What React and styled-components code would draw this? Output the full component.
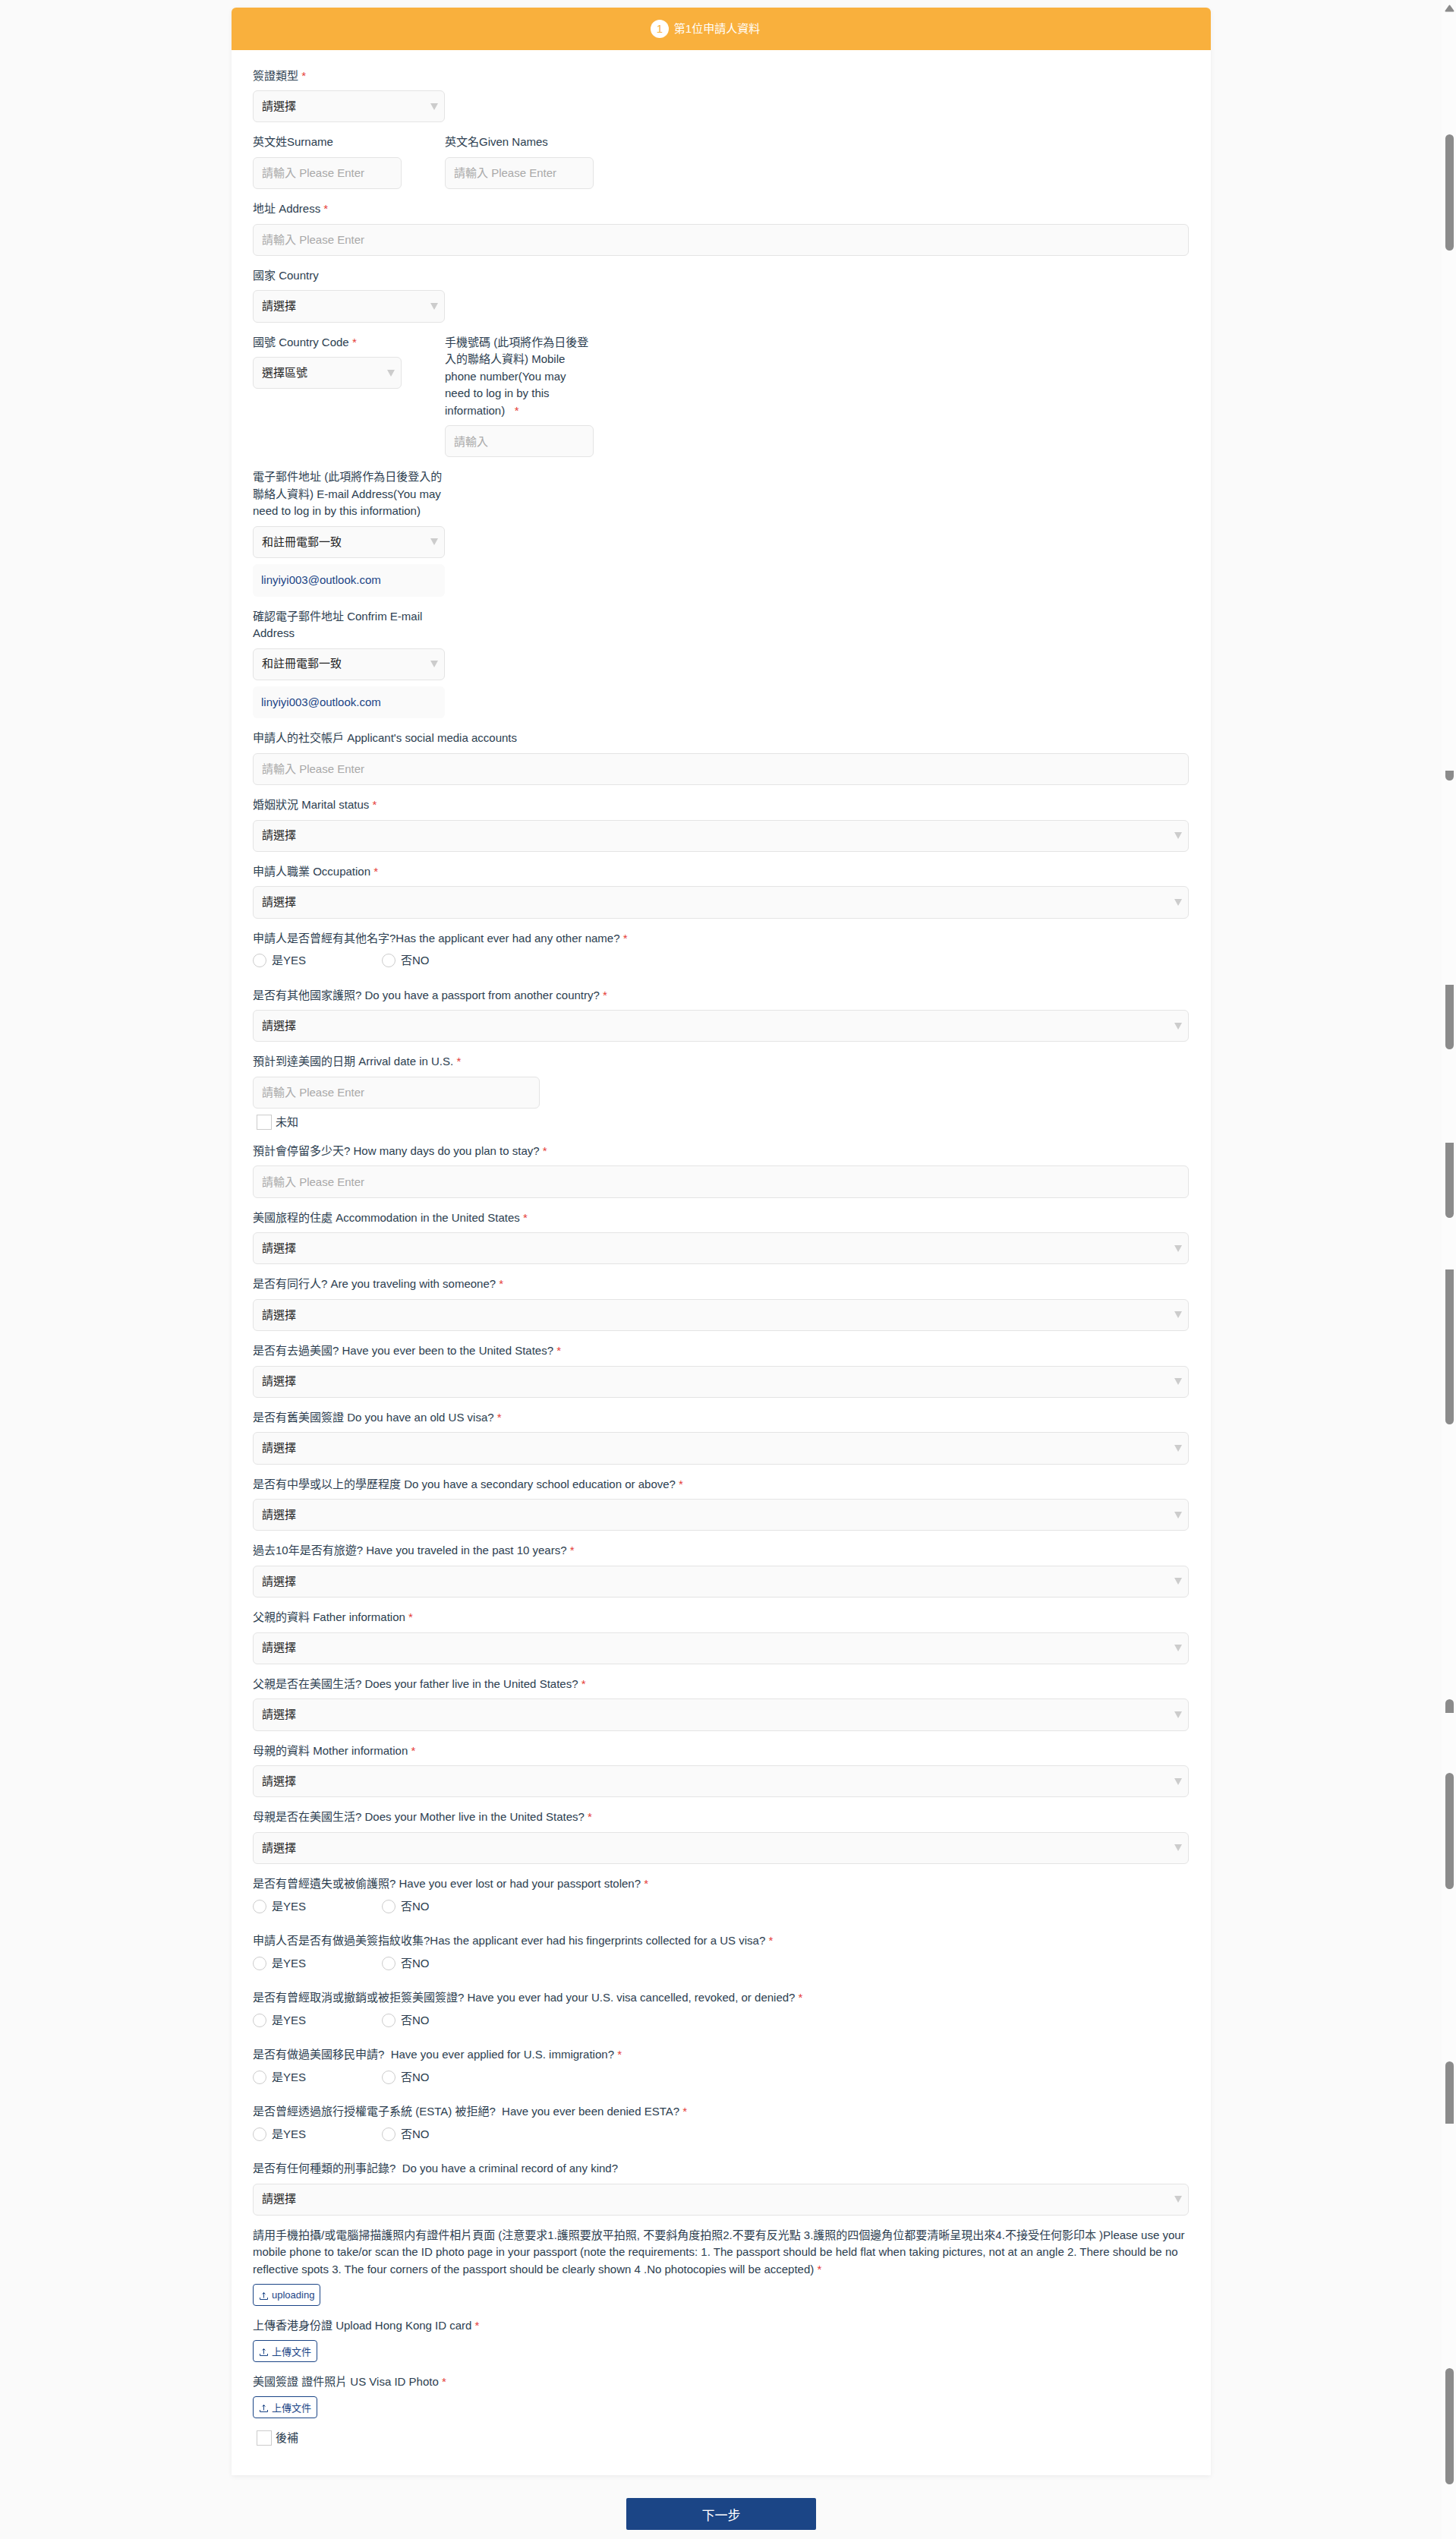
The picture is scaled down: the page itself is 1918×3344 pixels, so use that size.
import React, { useState } from 'react';
import styled, { createGlobalStyle } from 'styled-components';

const GlobalStyle = createGlobalStyle`
  * {
    box-sizing: border-box;
  }
  body {
    margin: 0;
    background-color: #fafafa;
    font-family: 'Liberation Sans', 'Noto Sans CJK TC', sans-serif;
    font-size: 15px;
    line-height: 22.5px;
    color: #2c3e50;
  }
  input, select, button {
    font-family: inherit;
  }
`;

const Page = styled.div`
  display: flex;
  height: 3344px;
  overflow: hidden;
`;

const Content = styled.div`
  flex: 1;
  display: flex;
  flex-direction: column;
  align-items: center;
  padding: 10px 0 0 1px;
`;

const Card = styled.section`
  width: 1290px;
  height: 3250px;
  border-radius: 6px 6px 0 0;
  background-color: #fff;
  box-shadow: 0 2px 6px rgba(0, 0, 0, 0.06);
`;

const CardHeader = styled.div`
  display: flex;
  align-items: center;
  justify-content: center;
  height: 56px;
  padding-right: 42px;
  border-radius: 6px 6px 0 0;
  background-color: #f9b03d;
  color: #fff;
`;

const StepNumber = styled.span`
  display: flex;
  align-items: center;
  justify-content: center;
  width: 24px;
  height: 24px;
  margin-right: 7px;
  border-radius: 50%;
  background-color: #fff;
  color: #f9b03d;
`;

const Form = styled.form`
  padding: 22.5px 29px 0 28px;
`;

const FieldRow = styled.div`
  display: flex;
  align-items: flex-start;
`;

const Column = styled.div`
  width: 196px;
  margin-right: 57px;
`;

const Field = styled.div`
  width: ${(props) => props.$width || '100%'};
  margin-bottom: 15px;
`;

const Label = styled.div`
  margin-bottom: 8px;
  white-space: pre-wrap;
`;

const Required = styled.span`
  color: #e53935;
`;

const TextInput = styled.input`
  display: block;
  width: ${(props) => props.$width || '100%'};
  height: 42.25px;
  padding: 0 11px;
  border: 1px solid #e4e4e4;
  border-radius: 6px;
  background-color: #fafafa;
  font-size: 15px;
  outline: none;
  &::placeholder {
    color: #a9a9a9;
  }
`;

const SelectBox = styled.div`
  display: flex;
  align-items: center;
  justify-content: space-between;
  height: 42.25px;
  padding: 0 8px 0 11px;
  border: 1px solid #e4e4e4;
  border-radius: 6px;
  background-color: #fafafa;
  color: #222;
`;

const Arrow = styled.span`
  border-top: 9px solid #ccc;
  border-left: 5.5px solid transparent;
  border-right: 5.5px solid transparent;
`;

const EmailBox = styled.div`
  display: flex;
  align-items: center;
  height: 42.25px;
  margin-top: 8.25px;
  padding: 0 11px;
  border-radius: 6px;
  background-color: #fafafa;
  color: #1b4586;
`;

const RadioGroup = styled.div`
  display: flex;
  height: 29.5px;
  align-items: flex-start;
`;

const RadioItem = styled.label`
  display: flex;
  align-items: center;
  width: 170px;
  height: 20.5px;
`;

const RadioCircle = styled.span`
  width: 18px;
  height: 18px;
  margin-right: 7px;
  border: 1px solid ${(props) => (props.$checked ? '#1b4586' : '#ccc')};
  border-radius: 50%;
  background-color: #fff;
`;

const CheckItem = styled.label`
  display: flex;
  align-items: center;
  height: 20px;
  margin: ${(props) => props.$margin};
`;

const CheckSquare = styled.span`
  width: 20px;
  height: 20px;
  margin-right: 5px;
  border: 1px solid #ccc;
  background-color: #fff;
`;

const UploadButton = styled.button`
  display: flex;
  align-items: center;
  height: 28.5px;
  padding: 0 7px;
  border: 1px solid #1b4586;
  border-radius: 4px;
  background-color: #fff;
  color: #1b4586;
  font-size: 13px;
  svg {
    margin: 1px 4px 0 0;
  }
`;

const NextButton = styled.button`
  flex-shrink: 0;
  width: 250px;
  height: 42px;
  margin-top: 30px;
  border: 0;
  border-radius: 2px;
  background-color: #1b4586;
  color: #fff;
  font-size: 17px;
`;

const ScrollTrack = styled.div`
  position: relative;
  width: 19px;
  background-color: #fcfcfc;
`;

const ScrollUp = styled.svg`
  position: absolute;
  top: 6px;
  left: 4px;
`;

const ScrollThumb = styled.div`
  position: absolute;
  left: 5px;
  width: 11px;
  top: ${(props) => props.$top}px;
  height: ${(props) => props.$height}px;
  border-radius: ${(props) => props.$radius || '6px'};
  background-color: #8b8b8b;
`;

const thumbs = [
  { top: 177, height: 153 },
  { top: 1015, height: 13, radius: '0 0 6px 6px' },
  { top: 1297, height: 85, radius: '0 0 6px 6px' },
  { top: 1505, height: 99, radius: '0 0 6px 6px' },
  { top: 1672, height: 204, radius: '0 0 6px 6px' },
  { top: 2238, height: 18, radius: '6px 6px 0 0' },
  { top: 2335, height: 153 },
  { top: 2715, height: 82, radius: '6px 6px 0 0' },
  { top: 3119, height: 153 },
];

const travelQuestions = [
  '美國旅程的住處 Accommodation in the United States',
  '是否有同行人? Are you traveling with someone?',
  '是否有去過美國? Have you ever been to the United States?',
  '是否有舊美國簽證 Do you have an old US visa?',
  '是否有中學或以上的學歷程度 Do you have a secondary school education or above?',
  '過去10年是否有旅遊? Have you traveled in the past 10 years?',
  '父親的資料 Father information',
  '父親是否在美國生活? Does your father live in the United States?',
  '母親的資料 Mother information',
  '母親是否在美國生活? Does your Mother live in the United States?',
];

const yesNoQuestions = [
  '是否有曾經遺失或被偷護照? Have you ever lost or had your passport stolen?',
  '申請人否是否有做過美簽指紋收集?Has the applicant ever had his fingerprints collected for a US visa?',
  '是否有曾經取消或撤銷或被拒簽美國簽證? Have you ever had your U.S. visa cancelled, revoked, or denied?',
  '是否有做過美國移民申請?  Have you ever applied for U.S. immigration?',
  '是否曾經透過旅行授權電子系統 (ESTA) 被拒絕?  Have you ever been denied ESTA?',
];

const passportNote =
  '請用手機拍攝/或電腦掃描護照内有證件相片頁面 (注意要求1.護照要放平拍照, 不要斜角度拍照2.不要有反光點 3.護照的四個邊角位都要清晰呈現出來4.不接受任何影印本 )Please use your mobile phone to take/or scan the ID photo page in your passport (note the requirements: 1. The passport should be held flat when taking pictures, not at an angle 2. There should be no reflective spots 3. The four corners of the passport should be clearly shown 4 .No photocopies will be accepted)';

function FormField({ label, required, width, children }) {
  return (
    <Field $width={width}>
      <Label>
        {label}
        {required && <Required> *</Required>}
      </Label>
      {children}
    </Field>
  );
}

function Select({ text = '請選擇' }) {
  return (
    <SelectBox>
      <span>{text}</span>
      <Arrow />
    </SelectBox>
  );
}

function YesNo() {
  const [value, setValue] = useState(null);

  return (
    <RadioGroup>
      <RadioItem onClick={() => setValue('yes')}>
        <RadioCircle $checked={value === 'yes'} />
        是YES
      </RadioItem>
      <RadioItem onClick={() => setValue('no')}>
        <RadioCircle $checked={value === 'no'} />
        否NO
      </RadioItem>
    </RadioGroup>
  );
}

function Upload({ text }) {
  return (
    <UploadButton type="button">
      <svg width="13" height="13" viewBox="0 0 13 13" fill="none" stroke="#1b4586">
        <path d="M1.5 9V11.5H11.5V9" />
        <path d="M6.5 9.5V2.5M4.5 4.5L6.5 2.5L8.5 4.5" />
      </svg>
      {text}
    </UploadButton>
  );
}

export default function App() {
  return (
    <Page>
      <GlobalStyle />
      <Content>
        <Card>
          <CardHeader>
            <StepNumber>1</StepNumber>
            第1位申請人資料
          </CardHeader>
          <Form>
            <FormField label="簽證類型" required width="253px">
              <Select />
            </FormField>
            <FieldRow>
              <Column>
                <FormField label="英文姓Surname">
                  <TextInput placeholder="請輸入 Please Enter" />
                </FormField>
              </Column>
              <Column>
                <FormField label="英文名Given Names">
                  <TextInput placeholder="請輸入 Please Enter" />
                </FormField>
              </Column>
            </FieldRow>
            <FormField label="地址 Address" required>
              <TextInput placeholder="請輸入 Please Enter" />
            </FormField>
            <FormField label="國家 Country" width="253px">
              <Select />
            </FormField>
            <FieldRow>
              <Column>
                <FormField label="國號 Country Code" required>
                  <Select text="選擇區號" />
                </FormField>
              </Column>
              <Column>
                <FormField
                  label="手機號碼 (此項將作為日後登入的聯絡人資料) Mobile phone number(You may need to log in by this information)  "
                  required
                >
                  <TextInput placeholder="請輸入" />
                </FormField>
              </Column>
            </FieldRow>
            <FormField
              label="電子郵件地址 (此項將作為日後登入的聯絡人資料) E-mail Address(You may need to log in by this information)"
              width="253px"
            >
              <Select text="和註冊電郵一致" />
              <EmailBox>linyiyi003@outlook.com</EmailBox>
            </FormField>
            <FormField label="確認電子郵件地址 Confrim E-mail Address" width="253px">
              <Select text="和註冊電郵一致" />
              <EmailBox>linyiyi003@outlook.com</EmailBox>
            </FormField>
            <FormField label="申請人的社交帳戶 Applicant's social media accounts">
              <TextInput placeholder="請輸入 Please Enter" />
            </FormField>
            <FormField label="婚姻狀況 Marital status" required>
              <Select />
            </FormField>
            <FormField label="申請人職業 Occupation" required>
              <Select />
            </FormField>
            <FormField
              label="申請人是否曾經有其他名字?Has the applicant ever had any other name?"
              required
            >
              <YesNo />
            </FormField>
            <FormField
              label="是否有其他國家護照? Do you have a passport from another country?"
              required
            >
              <Select />
            </FormField>
            <FormField label="預計到達美國的日期 Arrival date in U.S." required>
              <TextInput $width="378px" placeholder="請輸入 Please Enter" />
              <CheckItem $margin="8px 0 16.75px 5px">
                <CheckSquare />
                未知
              </CheckItem>
            </FormField>
            <FormField label="預計會停留多少天? How many days do you plan to stay?" required>
              <TextInput placeholder="請輸入 Please Enter" />
            </FormField>
            {travelQuestions.map((question) => (
              <FormField key={question} label={question} required>
                <Select />
              </FormField>
            ))}
            {yesNoQuestions.map((question) => (
              <FormField key={question} label={question} required>
                <YesNo />
              </FormField>
            ))}
            <FormField label="是否有任何種類的刑事記錄?  Do you have a criminal record of any kind?">
              <Select />
            </FormField>
            <FormField label={passportNote} required>
              <Upload text="uploading" />
            </FormField>
            <FormField label="上傳香港身份證 Upload Hong Kong ID card" required>
              <Upload text="上傳文件" />
            </FormField>
            <FormField label="美國簽證 證件照片 US Visa ID Photo" required>
              <Upload text="上傳文件" />
              <CheckItem $margin="16px 0 0 5px">
                <CheckSquare />
                後補
              </CheckItem>
            </FormField>
          </Form>
        </Card>
        <NextButton type="button">下一步</NextButton>
      </Content>
      <ScrollTrack>
        <ScrollUp width="13" height="10" viewBox="0 0 13 10">
          <path d="M6.5 1.5L11.5 8.5H1.5Z" fill="#8b8b8b" stroke="#8b8b8b" strokeWidth="2" strokeLinejoin="round" />
        </ScrollUp>
        {thumbs.map((thumb) => (
          <ScrollThumb key={thumb.top} $top={thumb.top} $height={thumb.height} $radius={thumb.radius} />
        ))}
      </ScrollTrack>
    </Page>
  );
}
